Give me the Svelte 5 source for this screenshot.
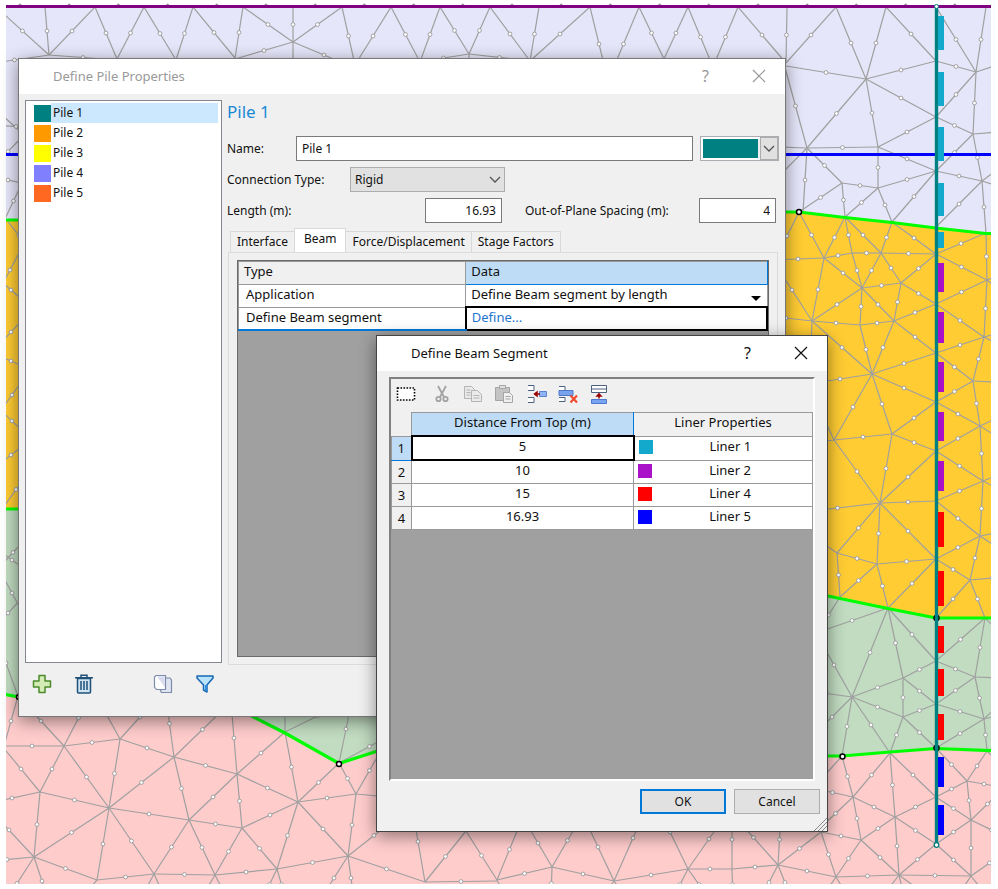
<script lang="ts">
	interface Pile {
		name: string;
		color: string;
	}

	const piles: Pile[] = [
		{ name: 'Pile 1', color: '#008080' },
		{ name: 'Pile 2', color: '#ff9900' },
		{ name: 'Pile 3', color: '#ffff00' },
		{ name: 'Pile 4', color: '#8080ff' },
		{ name: 'Pile 5', color: '#ff6820' }
	];

	const tabs = ['Interface', 'Beam', 'Force/Displacement', 'Stage Factors'];

	const segments = [
		{ distance: '5', liner: 'Liner 1', color: '#12a9cc' },
		{ distance: '10', liner: 'Liner 2', color: '#a912c9' },
		{ distance: '15', liner: 'Liner 4', color: '#ff0000' },
		{ distance: '16.93', liner: 'Liner 5', color: '#0000ff' }
	];

	let selectedPile = $state(0);
	let activeTab = $state('Beam');
	let activeRow = $state(0);
	let pileName = $state('Pile 1');
	let pileLength = $state('16.93');
	let spacing = $state('4');

	// Liner dashes along the pile: [top, bottom, segment index]
	const dashes = [
		[16, 50, 0], [72, 106, 0], [127, 161, 0], [183, 216, 0], [232, 248, 0],
		[263, 292, 1], [312, 343, 1], [362, 392, 1], [412, 441, 1], [461, 491, 1],
		[512, 547, 2], [571, 606, 2], [626, 653, 2], [669, 696, 2], [714, 740, 2],
		[757, 787, 3], [805, 835, 3]
	];

	// Mesh edges by region, each x1 y1 x2 y2
	const mesh = `
		-4 7 49 55, 45 7 49 55, 95 7 49 55, 49 55 -20 65, 49 55 117 60, 95 7 117 59, 144 7 117 59,
		144 7 176 60, 193 7 176 60, 193 7 235 58, 243 7 235 58, 243 7 293 42, 293 7 293 42, 342 7 293 42,
		293 42 235 59, 293 42 355 68, 342 7 355 65, 391 7 355 65, 391 7 420 62, 440 7 420 62, 440 7 469 54,
		490 7 469 54, 469 54 418 62, 469 54 530 61, 490 7 530 61, 539 7 530 61, 590 7 530 61, 590 7 608 81,
		639 7 608 81, 639 7 664 59, 688 7 664 59, 688 7 713 67, 738 7 713 67, 738 7 786 63, 787 7 786 63, 836 7 786 63,
		836 7 866 79, 886 7 866 79, 886 7 936 61, 936 7 976 72, 986 7 976 72, 293 42 293 78, 469 54 469 80,
		786 66 866 79, 866 79 936 61, 866 79 936 117, 866 79 807 148, 866 79 878 147, 784 64 807 148,
		936 117 878 147, 807 148 878 147, 807 148 750 146, 936 117 973 134, 936 61 976 72, 976 72 936 117,
		976 72 973 134, 976 72 1020 58, 973 134 1026 130, 973 134 936 171, 878 147 936 171, 936 171 982 181,
		936 171 878 188, 878 147 878 188, 973 134 982 181, 982 181 1026 148, 982 181 1026 195, 878 188 842 183,
		807 148 842 183, 807 148 803 212, 842 183 799 212, 842 183 845 217, 878 188 845 217, 878 188 892 222,
		936 171 892 222, 982 181 936 227, 982 181 986 233, 807 148 740 215,
		799 212 824 258, 799 212 775 260, 845 217 824 258, 845 217 852 253, 852 253 862 288,
		892 222 881 253, 852 253 824 258, 852 253 881 253, 845 217 881 253, 892 222 936 254, 936 254 986 233,
		881 253 936 254, 824 258 862 288, 881 253 862 288, 881 253 901 283, 901 283 936 254, 862 288 901 283,
		901 283 936 304, 824 258 812 321, 824 258 772 260, 862 288 812 321, 862 288 860 325, 862 288 894 321,
		901 283 894 321, 894 321 936 304, 812 321 860 325, 860 325 894 321, 894 321 936 353, 812 321 760 315,
		812 321 772 259, 812 321 810 370, 812 321 872 374, 860 325 872 374, 894 321 872 374, 872 374 936 353,
		872 374 936 402, 872 374 808 384, 872 374 834 440, 872 374 892 434, 892 434 936 402, 892 434 834 440,
		834 440 808 384, 892 434 936 451, 892 434 880 503, 834 440 880 503, 834 440 790 446, 880 503 936 451,
		880 503 936 501, 880 503 795 513, 880 503 837 553, 880 503 936 559, 880 503 877 564, 837 553 877 564,
		837 553 840 597, 877 564 840 597, 877 564 936 559, 877 564 888 608, 936 559 888 608, 837 553 808 533,
		936 254 987 280, 936 304 987 280, 986 233 987 280, 987 280 984 337, 936 304 984 337, 936 353 984 337,
		984 337 973 381, 936 353 973 381, 936 402 973 381, 973 381 980 426, 936 402 980 426, 936 451 980 426,
		980 426 983 481, 936 451 983 481, 936 501 983 481, 983 481 980 536, 936 501 980 536, 936 559 980 536,
		980 536 970 580, 936 559 970 580, 970 580 936 618, 970 580 985 618, 970 580 1014 576, 987 280 1010 270,
		987 280 1010 298, 984 337 1010 330, 984 337 1010 350, 973 381 1015 383, 980 426 1010 412, 980 426 1012 446,
		983 481 1012 470, 983 481 1010 495, 980 536 1010 530, 980 536 1010 556,
		840 597 817 633, 888 608 816 633, 888 608 852 697, 816 633 852 697, 852 697 802 690, 852 697 812 737,
		852 697 903 678, 852 697 903 717, 852 697 842 756, 888 608 903 678, 852 697 890 753, 903 678 903 717,
		903 678 936 661, 903 678 936 704, 903 717 936 704, 903 717 936 748, 903 717 890 753, 888 608 936 661,
		985 618 936 661, 985 618 975 677, 936 661 975 677, 975 677 936 704, 975 677 1025 679, 975 677 984 719,
		936 704 984 719, 984 719 936 748, 984 719 987 751, 984 719 1010 694, 984 719 1012 712, 985 618 1008 640,
		842 756 853 797, 842 756 800 803, 853 797 890 753, 890 753 895 817, 890 753 936 797, 853 797 895 817,
		853 797 861 840, 895 817 936 797, 895 817 861 840, 895 817 936 844, 895 817 899 875, 861 840 899 875,
		861 840 836 877, 861 840 821 832, 821 832 836 877, 836 877 899 875, 899 875 936 844, 899 875 971 876,
		936 844 971 876, 936 797 971 820, 936 844 971 820, 971 820 971 876, 936 748 967 781, 936 797 967 781,
		967 781 971 820, 967 781 987 751, 967 781 1001 787, 971 820 1004 788, 971 820 1012 840, 971 876 1008 850,
		853 797 818 830, 853 797 812 788, 899 875 880 900, 899 875 905 900, 836 877 820 900,
		836 877 850 900, 971 876 955 900, 971 876 990 900, 987 751 1010 775, 899 875 930 898,
		64 746 0 746, 64 746 120 739, 120 739 174 757, 174 757 237 774, 237 774 298 802, 298 802 356 794,
		298 802 339 763, 356 794 339 763, 285 732 298 802, 285 732 237 774, 285 732 285 680, 339 763 353 695,
		64 746 18 696, 64 746 93 690, 120 739 93 690, 120 739 160 695, 174 757 165 690, 174 757 231 702,
		237 774 231 702, 285 732 350 700, 64 746 40 792, 64 746 109 808, 120 739 109 808, 174 757 109 808,
		174 757 189 820, 237 774 189 820, 237 774 242 828, 298 802 242 828, 40 792 109 808, 109 808 189 820,
		189 820 242 828, 40 792 -16 804, 40 792 2 746, 40 792 34 857, 109 808 34 857, 109 808 97 880,
		109 808 154 874, 189 820 154 874, 189 820 215 875, 242 828 215 875, 242 828 277 869, 298 802 277 869,
		298 802 348 856, 356 794 348 856, 34 857 97 880, 97 880 154 874, 154 874 215 875, 215 875 277 869,
		277 869 348 856, 34 857 -20 862, 34 857 -16 803, 34 857 0 910, 34 857 50 905, 97 880 80 900,
		154 874 140 900, 154 874 166 900, 215 875 200 900, 215 875 228 900, 277 869 262 900, 277 869 286 900,
		348 856 320 900, 348 856 354 900, 356 794 400 798, 356 794 383 747, 348 856 400 815, 18 696 4 746,
		18 696 -6 630, 339 763 400 730,
		348 856 425 882, 425 882 411 801, 425 882 466 831, 497 880 466 831, 497 880 522 819, 425 882 497 881,
		497 880 552 867, 552 867 524 819, 552 867 583 814, 552 867 614 881, 614 881 582 813, 614 881 652 795,
		614 881 688 869, 688 869 652 795, 688 869 730 809, 688 869 732 869, 732 869 732 810, 732 869 778 865,
		778 865 729 810, 778 865 781 814, 778 865 821 832, 778 865 836 877, 552 867 551 900, 614 881 600 900,
		614 881 628 900, 688 869 672 900, 688 869 710 900, 732 869 733 900, 778 865 760 900, 778 865 792 900,
		497 880 508 900, -20 95 24 135, 24 135 -8 168, -8 125 40 128, -20 174 36 186, 22 183 5 219,
		6 219 32 252, 26 240 -6 300, -12 270 34 310, 30 312 -8 352, -14 350 36 372, 30 370 -6 420, -10 400 34 442,
		30 440 -8 470, 2 509 30 470, -16 540 40 580, 34 530 -8 575, -6 560 30 626, 30 590 -14 636`
		.split(',')
		.map((edge) => edge.trim().split(/\s+/).map(Number));

	const topNodes = Array.from({ length: 20 }, (_, i) => 20 + i * 49.2);
</script>

<main class="workspace">
	<svg class="model" viewBox="0 0 998 889" aria-hidden="true">
		<defs>
			<clipPath id="view"><rect x="6" y="8" width="985" height="876" /></clipPath>
		</defs>
		<g clip-path="url(#view)">
			<rect width="998" height="889" fill="#e6e6fa" />
			<path d="M0 219H19L786 211L799 212L986 233H998V889H0Z" fill="#ffcc33" />
			<path d="M0 509H400L828 596L936 618H998V889H0Z" fill="#c1dcc1" />
			<path d="M0 693L19 697L232 706L339 763L376 750L520 756L842 756L936 748L998 751V889H0Z" fill="#ffcccc" />
			{#each mesh as [x1, y1, x2, y2]}
				<line {x1} {y1} {x2} {y2} stroke="#a0a0a0" stroke-width="1.2" />
			{/each}
			{#each mesh as [x1, y1, x2, y2]}
				<circle cx={(x1 + x2) / 2} cy={(y1 + y2) / 2} r="1.9" fill="#fff" stroke="#999" stroke-width="0.9" />
			{/each}
			<path d="M0 154.500H998" stroke="#00f" stroke-width="3" />
			<g fill="none" stroke="#00ff00" stroke-width="3.200">
				<path d="M0 220H19M786 212H799L845 217.500L892 222.500L936 228L986 233.500H998" />
				<path d="M0 509H19M828 596L888 608.500L936 618H998" />
				<path d="M0 693.500L19 697M232 706L285 733L339 763.500L390 747M820 756H842L890 752L936 748.500L998 751" />
			</g>
		</g>
		{#each topNodes as x}
			<circle cx={x} cy="5" r="1.5" fill="#999" />
		{/each}
		<path d="M6 6.500H991" stroke="#800080" stroke-width="3" />
		<g stroke="#000" stroke-width="1.500" fill="#fff">
			<circle cx="799" cy="212" r="2.500" />
			<circle cx="339" cy="764" r="2.500" />
			<circle cx="842.500" cy="756.500" r="2.500" />
			<circle cx="936.500" cy="618" r="2.500" />
			<circle cx="936.500" cy="748" r="2.500" />
			<circle cx="19" cy="697" r="2.500" />
		</g>
		<path d="M936.500 6V845" stroke="#008080" stroke-width="3.400" />
		{#each dashes as [top, bottom, segment]}
			<rect x="938" y={top} width="6" height={bottom - top} fill={segments[segment].color} />
		{/each}
		<circle cx="936.500" cy="6.500" r="2" fill="#fff" stroke="#008080" />
		<circle cx="936.500" cy="845" r="2.300" fill="#fff" stroke="#008080" stroke-width="1.300" />
	</svg>

	<section class="dialog pile-dialog" aria-label="Define Pile Properties">
		<header class="titlebar inactive">
			<h1>Define Pile Properties</h1>
			<button class="caption" aria-label="Help">?</button>
			<button class="caption" aria-label="Close">
				<svg width="14" height="14" viewBox="0 0 14 14"><path d="M1 1L13 13M13 1L1 13" /></svg>
			</button>
		</header>
		<div class="pile-body">
			<div class="sidebar">
				<ul class="pile-list">
					{#each piles as pile, i}
						<li>
							<button class="pile" class:selected={i === selectedPile} onclick={() => (selectedPile = i)}>
								<span class="swatch" style="background: {pile.color}"></span>
								<span class="pile-name">{pile.name}</span>
							</button>
						</li>
					{/each}
				</ul>
				<div class="actions">
					<button aria-label="Add pile">
						<svg width="20" height="20" viewBox="0 0 20 20">
							<path d="M7 1.500h6v5.500h5.500v6H13v5.500H7V13H1.500V7H7z" fill="#d3ebb5" stroke="#4b8b2b" stroke-width="1.500" stroke-linejoin="round" />
						</svg>
					</button>
					<button aria-label="Delete pile">
						<svg width="20" height="20" viewBox="0 0 20 20" fill="none" stroke="#1f5179" stroke-width="1.500">
							<path d="M3.500 4.500h13V18q0 1-1 1h-11q-1 0-1-1z" fill="#cfe3f1" />
							<path d="M1 3.700h18M7 3V1.200h6V3" />
							<path d="M7 7v9M10 7v9M13 7v9" />
						</svg>
					</button>
					<button class="apart" aria-label="Copy pile">
						<svg width="20" height="20" viewBox="0 0 20 20" stroke="#7d8cab" stroke-width="1.200">
							<path d="M7.500 4H17l1.500 2v12.500h-10l-1-2z" fill="#dfe4f0" />
							<path d="M3 1.500h9.500v14H3.500L1.500 13V3z" fill="#fff" />
							<path d="M4 2.300h7.800v11z" fill="#d9dcef" stroke="none" />
						</svg>
					</button>
					<button aria-label="Filter piles">
						<svg width="20" height="20" viewBox="0 0 20 20">
							<path d="M2 2h16v2l-6 7v7l-3.500-2v-5L2 4z" fill="#b9e2fb" stroke="#1767b3" stroke-width="1.500" stroke-linejoin="round" />
							<path d="M10 11h2v6l-2-1z" fill="#2f8ede" />
						</svg>
					</button>
				</div>
			</div>

			<div class="details">
				<h2>{piles[selectedPile].name}</h2>
				<div class="row">
					<label class="name-label" for="name">Name:</label>
					<input id="name" class="grow" bind:value={pileName} />
					<div class="color-box">
						<select aria-label="Pile color"><option value="#008080"></option></select>
						<span class="drop"><svg width="12" height="8" viewBox="0 0 12 8"><path d="M1 1L6 6L11 1" /></svg></span>
					</div>
				</div>
				<div class="row">
					<label class="wide-label" for="connection">Connection Type:</label>
					<div class="connection">
						<select id="connection"><option>Rigid</option></select>
						<svg width="12" height="8" viewBox="0 0 12 8"><path d="M1 1L6 6L11 1" /></svg>
					</div>
				</div>
				<div class="row numbers">
					<label class="grow" for="length">Length (m):</label>
					<input id="length" class="number" bind:value={pileLength} />
					<label class="spacing-label" for="spacing">Out-of-Plane Spacing (m):</label>
					<input id="spacing" class="number" bind:value={spacing} />
				</div>

				<div class="tabs" role="tablist">
					{#each tabs as tab}
						<button role="tab" aria-selected={tab === activeTab} class:active={tab === activeTab} onclick={() => (activeTab = tab)}>{tab}</button>
					{/each}
				</div>
				<div class="tab-panel">
					<div class="grid-area">
						<table class="beam-table">
							<thead>
								<tr><th>Type</th><th class="current">Data</th></tr>
							</thead>
							<tbody>
								<tr>
									<td><label for="application">Application</label></td>
									<td class="application">
										<select id="application"><option>Define Beam segment by length</option></select>
										<svg width="10" height="5" viewBox="0 0 10 5"><path d="M0 0H10L5 5Z" /></svg>
									</td>
								</tr>
								<tr class="last">
									<td>Define Beam segment</td>
									<td class="focused"><button class="link">Define...</button></td>
								</tr>
							</tbody>
						</table>
					</div>
				</div>
			</div>
		</div>
	</section>

	<section class="dialog beam-dialog" aria-label="Define Beam Segment">
		<header class="titlebar">
			<h1>Define Beam Segment</h1>
			<button class="caption" aria-label="Help">?</button>
			<button class="caption" aria-label="Close">
				<svg width="14" height="14" viewBox="0 0 14 14"><path d="M1 1L13 13M13 1L1 13" /></svg>
			</button>
		</header>
		<div class="frame">
			<div class="toolbar">
				<button aria-label="Select all">
					<svg width="20" height="20" viewBox="0 0 20 20">
						<rect x="1.500" y="4" width="17" height="12" fill="#fff" stroke="#000" stroke-width="1.600" stroke-dasharray="1.600 1.400" />
					</svg>
				</button>
				<button class="cut" aria-label="Cut">
					<svg width="20" height="20" viewBox="0 0 20 20" fill="none" stroke="#a3a3a3" stroke-width="1.800">
						<path d="M6 2L12 13M14 2L8 13" />
						<circle cx="6.500" cy="15" r="2.200" />
						<circle cx="13.500" cy="15" r="2.200" />
					</svg>
				</button>
				<button aria-label="Copy">
					<svg width="20" height="20" viewBox="0 0 20 20" fill="#eaeaea" stroke="#b4b4b4">
						<path d="M1.500 2.500h7l3 3v9h-10z" />
						<path d="M8.500 6.500h6l4 4v7h-10z" />
						<path d="M3.500 6h4M3.500 8.500h4M3.500 11h4M10.500 11.500h6M10.500 14h6" />
					</svg>
				</button>
				<button aria-label="Paste">
					<svg width="20" height="20" viewBox="0 0 20 20" fill="#c4c4c4" stroke="#a5a5a5">
						<path d="M1.500 3.500h14v13h-14z" />
						<path d="M5.500 1.500h6v3h-6z" fill="#e0e0e0" />
						<path d="M9.500 8.500h6l3 3v7h-9z" fill="#f0f0f0" />
						<path d="M11.500 12.500h5M11.500 15h5" />
					</svg>
				</button>
				<button class="insert" aria-label="Insert row">
					<svg width="20" height="20" viewBox="0 0 20 20" fill="#fff" stroke="#4c6180">
						<path d="M1 1.500h6v5H1M1 13.500h6v5H1" />
						<path d="M12.500 7.500h7v5h-7z" fill="#8fb3f4" stroke="#5d83ca" />
						<path d="M13 10H8M10 8L7.500 10L10 12Z" fill="#900" stroke="#900" stroke-width="1.500" />
					</svg>
				</button>
				<button aria-label="Delete row">
					<svg width="20" height="20" viewBox="0 0 20 20" fill="none" stroke="#4c6180">
						<path d="M1 2.500h6v4H1M1 13.500h6v4H1" fill="#fff" />
						<path d="M1 6.500h14v5H1z" fill="#78a2eb" stroke="#4f78c4" />
						<path d="M12.500 11.500L19 18.500M19 11.500L12.500 18.500" stroke="#f04a31" stroke-width="2.200" />
					</svg>
				</button>
				<button aria-label="Append row">
					<svg width="20" height="20" viewBox="0 0 20 20" fill="#fff" stroke="#4c6180">
						<path d="M2.500 1.500h15v7h-15zM2.500 5h15" />
						<path d="M2.500 15.500h15v4h-15z" fill="#79a4f0" stroke="#4f78d2" />
						<path d="M10 14.500V11M8 12L10 9.800L12 12Z" fill="#900" stroke="#900" stroke-width="1.500" />
					</svg>
				</button>
			</div>
			<table class="segment-table">
				<thead>
					<tr><th class="index"></th><th class="current">Distance From Top (m)</th><th>Liner Properties</th></tr>
				</thead>
				<tbody>
					{#each segments as segment, i}
						<tr onclick={() => (activeRow = i)}>
							<th class="index" class:current={i === activeRow}>{i + 1}</th>
							<td class:focused={i === activeRow}>{segment.distance}</td>
							<td>
								<div class="liner">
									<span class="chip" style="background: {segment.color}"></span>
									<span class="liner-name">{segment.liner}</span>
								</div>
							</td>
						</tr>
					{/each}
				</tbody>
			</table>
		</div>
		<footer>
			<button class="push default">OK</button>
			<button class="push">Cancel</button>
		</footer>
		<svg class="grip" width="14" height="14" viewBox="0 0 14 14"><path d="M1 14L14 1M5 14L14 5M9 14L14 9" /></svg>
	</section>
</main>

<style>
	:global(body) {
		margin: 0;
		background: #fff;
	}

	.workspace {
		position: relative;
		min-height: 100vh;
		overflow: hidden;
		font: 12px/16px 'Noto Sans', 'Open Sans', sans-serif;
		color: #111;
	}

	.model {
		display: block;
		width: 100%;
	}

	button,
	input,
	select {
		font: inherit;
		color: inherit;
		margin: 0;
		padding: 0;
		border: 0;
		border-radius: 0;
		background: none;
		box-sizing: border-box;
	}

	select {
		appearance: none;
	}

	h1,
	h2 {
		margin: 0;
		font-weight: 400;
	}

	.dialog {
		position: absolute;
		box-sizing: border-box;
		border: 1px solid #777;
		background: #f0f0f0;
		box-shadow: 0 4px 16px rgba(0, 0, 0, 0.45);
	}

	.pile-dialog {
		left: 18px;
		top: 58px;
		width: min(768px, calc(100% - 36px));
	}

	.beam-dialog {
		left: 376px;
		top: 335px;
		width: min(452px, calc(100% - 376px));
		border-color: #444;
	}

	.titlebar {
		display: flex;
		align-items: center;
		box-sizing: border-box;
		height: 35px;
		padding: 0 0 2px 34px;
		background: #fff;
	}

	.titlebar h1 {
		flex: 1;
		font-size: 13px;
	}

	.inactive {
		color: #999;
	}

	.caption {
		display: grid;
		place-items: center;
		width: 53px;
		height: 33px;
		font-size: 16px;
	}

	.caption svg {
		fill: none;
		stroke: currentColor;
		stroke-width: 1.2;
	}

	.pile-body {
		display: grid;
		grid-template-columns: 197px 1fr;
		gap: 5px;
		padding: 6px 6px 22px;
	}

	.pile-list {
		list-style: none;
		margin: 0;
		padding: 2px 3px 2px 8px;
		min-height: 557px;
		border: 1px solid #828790;
		background: #fff;
	}

	.pile {
		display: flex;
		align-items: center;
		width: 100%;
		height: 20px;
		text-align: left;
	}

	.swatch {
		width: 17px;
		height: 17px;
	}

	.pile-name {
		flex: 1;
		padding: 2px;
	}

	.selected .pile-name {
		background: #cce8ff;
	}

	.actions {
		display: flex;
		gap: 22px;
		padding: 11px 7px 0;
	}

	.actions button {
		height: 20px;
	}

	.actions .apart {
		margin-left: 37px;
	}

	.details {
		display: flex;
		flex-direction: column;
		min-width: 0;
	}

	h2 {
		padding-bottom: 12px;
		font-size: 17px;
		line-height: 24px;
		color: #1a8ad6;
	}

	.row {
		display: flex;
		align-items: center;
		gap: 7px;
		margin-bottom: 6px;
	}

	.name-label {
		width: 62px;
	}

	.wide-label {
		width: 116px;
	}

	.grow {
		flex: 1;
		min-width: 0;
	}

	input {
		height: 25px;
		padding: 0 5px;
		border: 1px solid #7a7a7a;
		background: #fff;
	}

	.number {
		width: 77px;
		text-align: right;
	}

	.numbers {
		margin-bottom: 5px;
		padding-right: 3px;
	}

	.spacing-label {
		width: 167px;
		padding-left: 16px;
	}

	.color-box {
		position: relative;
		width: 79px;
		height: 25px;
	}

	.color-box select {
		width: 100%;
		height: 25px;
		padding: 2px 20px 2px 2px;
		border: 1px solid #abadb3;
		outline: 0;
		background: #008080 content-box;
		box-shadow: inset 0 0 0 2px #fff;
	}

	.drop {
		position: absolute;
		top: 1px;
		right: 1px;
		display: grid;
		place-items: center;
		width: 18px;
		height: 23px;
		border: 1px solid #adadad;
		box-sizing: border-box;
		background: #e1e1e1;
		pointer-events: none;
	}

	.drop path,
	.connection path {
		fill: none;
		stroke: #555;
		stroke-width: 1.3;
	}

	.connection {
		position: relative;
	}

	.connection select {
		width: 155px;
		height: 25px;
		padding: 0 4px;
		border: 1px solid #adadad;
		background: #e1e1e1;
	}

	.connection svg {
		position: absolute;
		right: 4px;
		top: 9px;
		pointer-events: none;
	}

	.tabs {
		display: flex;
		align-items: flex-end;
		padding: 0 3px;
	}

	.tabs button {
		height: 21px;
		padding: 0 6px;
		border: 1px solid #d9d9d9;
		border-bottom: 0;
		margin-right: -1px;
		white-space: nowrap;
	}

	.tabs .active {
		height: 24px;
		padding: 0 9px 3px;
		background: #fff;
	}

	.tab-panel {
		display: flex;
		flex: 1;
		margin: 0 1px 29px;
		padding: 3px;
		border: 1px solid #dcdcdc;
		background: linear-gradient(#f0f0f0, #f0f0f0) content-box #fff;
	}

	.grid-area {
		flex: 1;
		margin: 4px 5px;
		border: 1px solid #696969;
		background: #a0a0a0;
	}

	table {
		width: 100%;
		border-collapse: collapse;
		table-layout: fixed;
		font-size: 13px;
		line-height: 18px;
	}

	th,
	td {
		height: 22px;
		padding: 0 5px;
		border: 1px solid #999;
		font-weight: 400;
		text-align: left;
		vertical-align: top;
		background: #fff;
	}

	thead th {
		background: #f0f0f0;
	}

	thead .current {
		background: #bedcf5;
		border-right: 1px solid #0078d7;
	}

	.beam-table th:first-child {
		width: 43%;
		box-sizing: border-box;
	}

	.beam-table .current {
		border-bottom: 1px solid #0078d7;
	}

	.beam-table td:first-child {
		padding-left: 7px;
	}

	.beam-table td {
		height: 21px;
	}

	.beam-table .last td:first-child {
		border-bottom: 2px solid #0078d7;
	}

	.focused {
		border: 2px solid #000;
	}

	.application {
		position: relative;
	}

	.application select {
		display: block;
		width: 100%;
	}

	.application svg {
		position: absolute;
		right: 6px;
		bottom: 5px;
		pointer-events: none;
	}

	.link {
		display: block;
		color: #1f74cf;
	}

	.frame {
		min-height: 400px;
		margin: 6px 12px 0;
		border: 2px solid #696969;
		border-color: #808080 #fff #fff #808080;
		background: #a0a0a0;
	}

	.toolbar {
		display: flex;
		align-items: center;
		gap: 11px;
		box-sizing: border-box;
		height: 33px;
		padding: 0 0 3px 5px;
		background: #f0f0f0;
	}

	.toolbar button {
		height: 20px;
	}

	.toolbar .cut {
		margin-left: 5px;
	}

	.toolbar .insert {
		margin-left: 2px;
	}

	.segment-table th,
	.segment-table td {
		height: 22px;
		padding: 0 4px;
		text-align: center;
	}

	.segment-table .index {
		width: 19px;
		padding: 0;
		vertical-align: middle;
		background: #f0f0f0;
	}

	.segment-table thead .index {
		border-color: #f0f0f0 #999 #999 #f0f0f0;
	}

	.segment-table thead .current {
		width: 213px;
	}

	.segment-table tbody .current {
		background: #bedcf5;
		border-bottom-color: #0078d7;
	}

	.liner {
		display: flex;
		align-items: center;
	}

	.chip {
		width: 14px;
		height: 14px;
		margin-top: 2px;
	}

	.liner-name {
		flex: 1;
	}

	footer {
		display: flex;
		justify-content: flex-end;
		gap: 8px;
		padding: 8px 7px 17px;
	}

	.push {
		width: 86px;
		height: 25px;
		border: 1px solid #adadad;
		background: #e1e1e1;
	}

	.default {
		border: 2px solid #0078d7;
	}

	.grip {
		position: absolute;
		right: 0;
		bottom: 0;
		fill: none;
		stroke: #888;
	}
</style>
